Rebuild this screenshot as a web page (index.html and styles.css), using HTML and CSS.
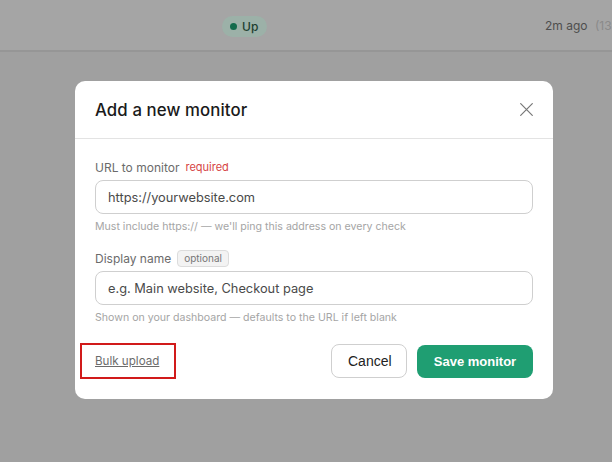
FILE: index.html
```html
<!DOCTYPE html>
<html>
<head>
<meta charset="utf-8">
<link rel="stylesheet" href="styles.css">
</head>
<body>
<div class="page">
  <div class="row">
    <div class="cell-status"><span class="badge"><span class="dot"></span>Up</span></div>
    <div class="cell-time">2m ago <span class="time-abs">(13:32)</span></div>
  </div>
</div>
<div class="overlay">
  <div class="modal">
    <div class="modal-head">
      <h2 class="title">Add a new monitor</h2>
      <button class="close" aria-label="Close">
        <svg width="13" height="13" viewBox="0 0 13 13"><path d="M0.7 0.7L12.3 12.3M12.3 0.7L0.7 12.3" stroke="#777" stroke-width="1.2" stroke-linecap="round"/></svg>
      </button>
    </div>
    <div class="modal-body">
      <div class="field">
        <label class="label">URL to monitor <span class="req">required</span></label>
        <input class="input" placeholder="https://yourwebsite.com">
        <div class="help">Must include https:// — we'll ping this address on every check</div>
      </div>
      <div class="field">
        <label class="label">Display name <span class="opt">optional</span></label>
        <input class="input" placeholder="e.g. Main website, Checkout page">
        <div class="help">Shown on your dashboard — defaults to the URL if left blank</div>
      </div>
    </div>
    <div class="modal-foot">
      <a class="bulk" href="#">Bulk upload</a>
      <div class="actions">
        <button class="btn btn-cancel">Cancel</button>
        <button class="btn btn-save">Save monitor</button>
      </div>
    </div>
  </div>
</div>
</body>
</html>
```
FILE: styles.css
```css
* { box-sizing: border-box; }
html, body { margin: 0; padding: 0; }
body {
  width: 612px;
  height: 462px;
  overflow: hidden;
  background: #a0a0a0;
  font-family: "Inter", "Noto Sans", sans-serif;
  position: relative;
}
.page { width: 100%; }
.row {
  height: 52px;
  background: #a5a5a5;
  border-bottom: 2px solid #969696;
  display: flex;
  align-items: center;
  padding-left: 222px;
}
.cell-status { width: 323px; flex-shrink: 0; }
.badge {
  display: inline-flex;
  align-items: center;
  gap: 5px;
  height: 21px;
  padding: 0 9px 0 8px;
  border-radius: 11px;
  background: #9cb1a8;
  color: #1c3f31;
  font-size: 12px;
  font-weight: 500;
}
.dot { width: 7px; height: 7px; border-radius: 50%; background: #136b4c; }
.cell-time { font-size: 12px; color: #4e4e4e; white-space: nowrap; flex-shrink: 0; }
.time-abs { color: #8a8a8a; margin-left: 4px; }

.overlay {
  position: absolute;
  left: 0; top: 0; right: 0; bottom: 0;
}
.modal {
  position: absolute;
  left: 75px; top: 81px;
  width: 478px;
  height: 318px;
  background: #fff;
  border-radius: 10px;
  display: flex;
  flex-direction: column;
}
.modal-head {
  height: 58px;
  border-bottom: 1px solid #e3e3e3;
  display: flex;
  align-items: center;
  justify-content: space-between;
  padding: 0 20px 0 20px;
}
.title { margin: 0; font-size: 16.8px; font-weight: 500; color: #1a1a1a; letter-spacing: 0.1px; }
.close {
  border: 0; background: none; padding: 0; width: 13px; height: 13px;
  display: flex;
}
.modal-body { padding: 20px 20px 0; display: flex; flex-direction: column; gap: 17px; }
.field { display: flex; flex-direction: column; }
.label { font-size: 12px; color: #6b6b6b; display: flex; align-items: center; gap: 6px; height: 16px; margin-bottom: 5px; }
.req { color: #d64545; font-size: 11px; }
.opt {
  font-size: 10px; color: #777; background: #f3f3f3; border: 1px solid #dcdcdc;
  border-radius: 4px; padding: 1px 6px; line-height: 13px;
}
.input {
  height: 34px;
  border: 1px solid #cfcfcf;
  border-radius: 8px;
  padding: 0 12px;
  font-family: inherit;
  font-size: 12.8px;
  color: #333;
  outline: none;
}
.input::placeholder { color: #4a4a4a; }
.help { font-size: 10.6px; color: #a5a5a5; margin-top: 6px; }
.modal-foot {
  margin-top: auto;
  padding: 0 20px 21px;
  display: flex;
  align-items: center;
  justify-content: space-between;
}
.bulk {
  font-size: 11.6px; color: #6b6b6b; text-decoration: underline;
  outline: 2px solid #d11a1a;
  outline-offset: 0;
  padding: 9px 15px 9px 13px;
  margin-left: -13px;
}
.actions { display: flex; gap: 10px; align-items: center; }
.btn {
  font-family: "Liberation Sans", Arial, sans-serif;
  font-size: 14px;
  border-radius: 8px;
  height: 34px;
}
.btn-cancel { background: #fff; border: 1px solid #cfcfcf; color: #222; padding: 0 16px; width: 76px; }
.btn-save { background: #1f9e72; border: 0; color: #fff; font-weight: 700; font-size: 13px; width: 116px; height: 33px; }
```
